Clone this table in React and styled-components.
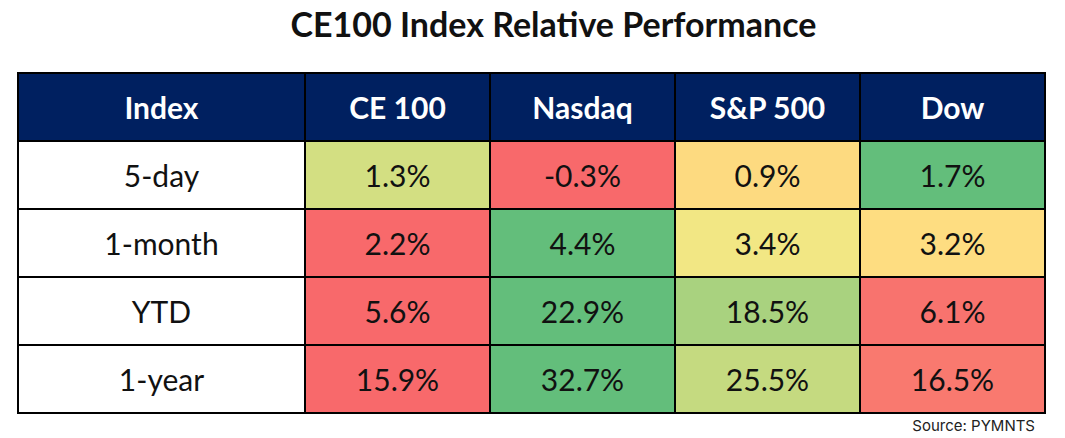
import React from "react";
import styled, { createGlobalStyle } from "styled-components";

const GlobalStyle = createGlobalStyle`
  body {
    margin: 0;
    background: #ffffff;
    font-family: Lato, "Open Sans", sans-serif;
  }
`;

const columns = ["Index", "CE 100", "Nasdaq", "S&P 500", "Dow"];

const rows = [
  {
    label: "5-day",
    cells: [
      { value: "1.3%", color: "#d3df82" },
      { value: "-0.3%", color: "#f8696b" },
      { value: "0.9%", color: "#fdda80" },
      { value: "1.7%", color: "#63be7b" },
    ],
  },
  {
    label: "1-month",
    cells: [
      { value: "2.2%", color: "#f8696b" },
      { value: "4.4%", color: "#63be7b" },
      { value: "3.4%", color: "#f2e784" },
      { value: "3.2%", color: "#fedd81" },
    ],
  },
  {
    label: "YTD",
    cells: [
      { value: "5.6%", color: "#f8696b" },
      { value: "22.9%", color: "#63be7b" },
      { value: "18.5%", color: "#a9d27f" },
      { value: "6.1%", color: "#f8736e" },
    ],
  },
  {
    label: "1-year",
    cells: [
      { value: "15.9%", color: "#f8696b" },
      { value: "32.7%", color: "#63be7b" },
      { value: "25.5%", color: "#c5da80" },
      { value: "16.5%", color: "#f9796f" },
    ],
  },
];

export default function App() {
  return (
    <Page>
      <GlobalStyle />
      <Title>CE100 Index Relative Performance</Title>

      <Table>
        <thead>
          <tr>
            {columns.map((c) => (
              <HeadCell key={c}>{c}</HeadCell>
            ))}
          </tr>
        </thead>
        <tbody>
          {rows.map((r) => (
            <tr key={r.label}>
              <Cell>{r.label}</Cell>
              {r.cells.map((c, i) => (
                <Cell key={i} $bg={c.color}>
                  {c.value}
                </Cell>
              ))}
            </tr>
          ))}
        </tbody>
      </Table>

      <Source>Source: PYMNTS</Source>
    </Page>
  );
}

const Page = styled.div`
  width: 1065px;
  height: 438px;
  padding: 0 19px 0 17px;
  box-sizing: border-box;
  display: flex;
  flex-direction: column;
`;

const Title = styled.h1`
  margin: 0;
  padding: 4px 0 0 44px;
  height: 72px;
  box-sizing: border-box;
  text-align: center;
  font-size: 34px;
  font-weight: 700;
  line-height: 40px;
  color: #111111;
`;

const Table = styled.table`
  width: 1029px;
  border-collapse: collapse;
  table-layout: fixed;
  border: 2px solid #000000;

  th:first-child {
    width: 287px;
  }
`;

const HeadCell = styled.th`
  height: 68px;
  padding: 0;
  box-sizing: border-box;
  background: #002060;
  color: #ffffff;
  font-size: 30px;
  font-weight: 700;
  text-align: center;
  border: 2px solid #000000;
`;

const Cell = styled.td`
  height: 68px;
  padding: 0;
  box-sizing: border-box;
  background: ${(p) => p.$bg || "#ffffff"};
  color: #111111;
  font-size: 30px;
  font-weight: 400;
  text-align: center;
  border: 2px solid #000000;
`;

const Source = styled.div`
  align-self: flex-end;
  margin-top: 2px;
  margin-right: 11px;
  font-family: Inter, "Liberation Sans", sans-serif;
  font-size: 15px;
  color: #222222;
`;
